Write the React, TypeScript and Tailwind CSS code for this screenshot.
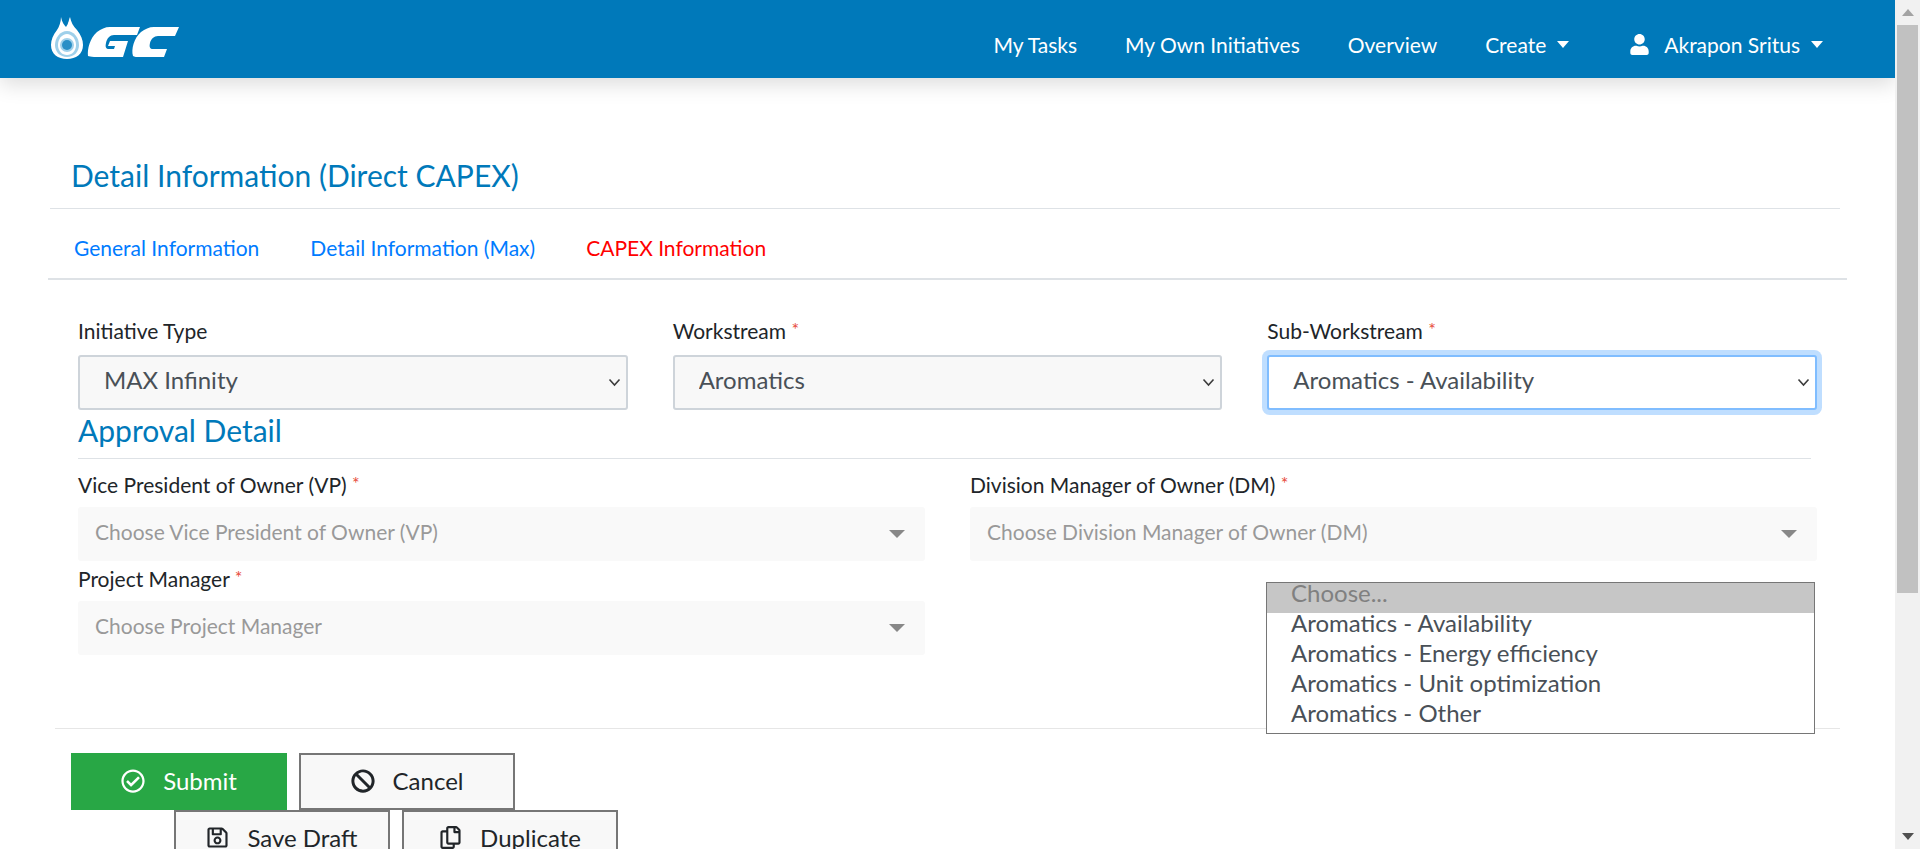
import React from "react";
import { FaUser, FaRegCheckCircle, FaBan, FaRegSave, FaRegCopy } from "react-icons/fa";

const Caret = () => (
  <span className="ml-[11px] inline-block h-0 w-0 border-x-[6px] border-t-[7px] border-x-transparent border-t-white" />
);

const Logo = () => (
  <svg width="130" height="44" viewBox="0 0 130 44" role="img" aria-label="GC">
    <path d="M11 0c1 5 3 8 5 10 1-2 2-3 2-4 1-2 1-4 2-6 1 5 3 9 7 13 4 5 6 10 6 15 0 9-7 14-16 14S1 37 1 28c0-5 2-10 6-15 2-3 4-8 4-13z" fill="#fff" />
    <path d="M17 14c-7 0-12 7-12 14s5 12 12 12 12-5 12-12-5-14-12-14z" fill="#9fd0ea" />
    <path d="M17 17c-5 0-9 5-9 11s4 10 9 10 9-4 9-10-4-11-9-11z" fill="#fff" />
    <circle cx="17" cy="28" r="7" fill="#9fd0ea" />
    <circle cx="17" cy="28" r="5" fill="#2a8fc6" />
    <path d="M38 39c-1-7 2-18 9-24 4-3 8-5 13-5h30l-3 8H64c-4 0-7 3-8 8-1 4 0 6 3 6h5l1-3h-7l2-5h18l-5 16H44c-3 0-5-1-6-1z" fill="#fff" />
    <path d="M83 39c-2-7 1-18 8-24 4-3 8-5 13-5h25l-4 9h-17c-4 0-7 3-8 7-1 4 0 6 3 6h14l-3 8H90c-3 0-6 0-7-1z" fill="#fff" />
  </svg>
);

const Req = () => <span className="align-[3px] text-[18px] leading-[0] text-[#e74c3c]">*</span>;

function NativeSelect({ value, options, focused }: { value: string; options: string[]; focused?: boolean }) {
  return (
    <div className="relative">
      <select
        defaultValue={value}
        className={
          focused
            ? "h-[55px] w-full appearance-none rounded-[3px] border-2 border-[#80bdff] bg-white pb-[5px] pl-[24px] pr-1 text-[24px] text-[#495057] shadow-[0_0_0_5px_rgba(0,123,255,0.25)] outline-none"
            : "h-[55px] w-full appearance-none rounded-[3px] border-2 border-[#ced4da] bg-[#f8f8f8] pb-[5px] pl-[24px] pr-1 text-[24px] text-[#495057] outline-none"
        }
      >
        {options.map((o) => (
          <option key={o}>{o}</option>
        ))}
      </select>
      <svg className="pointer-events-none absolute right-[7px] top-[23px]" width="13" height="9" viewBox="0 0 13 9" fill="none">
        <path d="M1.5 1.5 6.5 7 11.5 1.5" stroke="#3c3c3c" strokeWidth="1.6" />
      </svg>
    </div>
  );
}

const Ghost = ({ text }: { text: string }) => (
  <div className="flex h-[54px] items-center justify-between rounded-[3px] bg-[#f9f9f9] pl-[17px] pr-[20px] text-[21px] text-[#999]">
    <span className="pb-[5px]">{text}</span>
    <span className="inline-block h-0 w-0 border-x-[8px] border-t-[8px] border-x-transparent border-t-[#888]" />
  </div>
);

const Btn = ({ icon, text }: { icon: React.ReactNode; text: string }) => (
  <button className="flex h-[57px] w-[216px] items-center justify-center gap-[18px] border-[2px] border-[#767676] bg-[#f8f8f8] pb-[2px] text-[24px] text-[#212529]">
    {icon}
    {text}
  </button>
);

export default function App() {
  return (
    <div className="flex h-[849px] w-full overflow-hidden bg-white font-['Lato',sans-serif]">
      <div className="h-[849px] min-w-0 flex-1 overflow-hidden">
        <header className="relative z-10 flex h-[78px] items-center justify-between bg-[#0079ba] pl-[50px] pr-[72px] text-white shadow-[0_6px_20px_rgba(0,0,0,0.14)]">
          <Logo />
          <nav className="flex items-center gap-[48px] pt-[11px] text-[21px]">
            <span>My Tasks</span>
            <span>My Own Initiatives</span>
            <span>Overview</span>
            <span className="flex items-center">Create<Caret /></span>
            <span className="ml-[12px] flex items-center">
              <FaUser className="mr-[14px] text-[21px]" />
              Akrapon Sritus
              <Caret />
            </span>
          </nav>
        </header>

        <main className="relative text-[#212529]">
          <div className="pl-[50px] pr-[55px] pt-[77px]">
            <h1 className="border-b border-[#dee2e6] pb-[13px] pl-[21px] text-[30px] leading-[40px] text-[#0079ba]">
              Detail Information (Direct CAPEX)
            </h1>
          </div>
          <div className="ml-[48px] mr-[48px] flex gap-[51px] border-b-2 border-[#dee2e6] pb-[17px] pl-[26px] pt-[26px] text-[21px] leading-[26px] text-[#007bff]">
            <span>General Information</span>
            <span>Detail Information (Max)</span>
            <span className="text-[#ff0000]">CAPEX Information</span>
          </div>

          <div className="pl-[78px] pr-[78px] pt-[39px]">
            <div className="grid grid-cols-3 gap-x-[45px]">
              <div>
                <label className="mb-[12px] block text-[21px] leading-[24px]">Initiative Type</label>
                <NativeSelect value="MAX Infinity" options={["MAX Infinity"]} />
              </div>
              <div>
                <label className="mb-[12px] block text-[21px] leading-[24px]">Workstream <Req /></label>
                <NativeSelect value="Aromatics" options={["Aromatics"]} />
              </div>
              <div>
                <label className="mb-[12px] block text-[21px] leading-[24px]">Sub-Workstream <Req /></label>
                <NativeSelect value="Aromatics - Availability" options={["Aromatics - Availability"]} focused />
              </div>
            </div>

            <h2 className="mr-[6px] border-b border-[#dee2e6] pb-[7px] text-[30px] leading-[41px] text-[#0079ba]">
              Approval Detail
            </h2>

            <div className="mt-[14px] grid grid-cols-2 gap-x-[45px] gap-y-[6px]">
              <div>
                <label className="mb-[10px] block text-[21px] leading-[24px]">Vice President of Owner (VP) <Req /></label>
                <Ghost text="Choose Vice President of Owner (VP)" />
              </div>
              <div>
                <label className="mb-[10px] block text-[21px] leading-[24px]">Division Manager of Owner (DM) <Req /></label>
                <Ghost text="Choose Division Manager of Owner (DM)" />
              </div>
              <div>
                <label className="mb-[10px] block text-[21px] leading-[24px]">Project Manager <Req /></label>
                <Ghost text="Choose Project Manager" />
              </div>
            </div>
          </div>

          <div className="ml-[55px] mr-[55px] mt-[73px] border-t border-[#e6e6e6]" />

          <div className="pl-[71px] pt-[24px]">
            <div className="flex gap-[12px]">
              <button className="flex h-[57px] w-[216px] items-center justify-center gap-[18px] bg-[#28a745] pb-[2px] text-[24px] text-white">
                <FaRegCheckCircle className="text-[24px]" />
                Submit
              </button>
              <Btn icon={<FaBan className="text-[24px]" />} text="Cancel" />
            </div>
            <div className="ml-[103px] flex gap-[12px]">
              <Btn icon={<FaRegSave className="text-[23px]" />} text="Save Draft" />
              <Btn icon={<FaRegCopy className="text-[23px]" />} text="Duplicate" />
            </div>
          </div>

          <ul className="absolute left-[1266px] top-[504px] w-[549px] border border-[#767676] bg-white text-[24px] leading-[20px] text-[#495057]">
            <li className="h-[30px] bg-[#c6c6c6] pl-[24px] text-[#808080]">Choose...</li>
            <li className="h-[30px] pl-[24px]">Aromatics - Availability</li>
            <li className="h-[30px] pl-[24px]">Aromatics - Energy efficiency</li>
            <li className="h-[30px] pl-[24px]">Aromatics - Unit optimization</li>
            <li className="h-[30px] pl-[24px]">Aromatics - Other</li>
          </ul>
        </main>
      </div>

      <div className="flex h-[849px] w-[25px] shrink-0 flex-col items-center bg-[#f1f1f1]">
        <div className="flex h-[25px] items-center">
          <span className="h-0 w-0 border-x-[6px] border-b-[7px] border-x-transparent border-b-[#a3a3a3]" />
        </div>
        <div className="h-[568px] w-[21px] bg-[#c1c1c1]" />
        <div className="flex-1" />
        <div className="flex h-[25px] items-center">
          <span className="h-0 w-0 border-x-[6px] border-t-[7px] border-x-transparent border-t-[#505050]" />
        </div>
      </div>
    </div>
  );
}
